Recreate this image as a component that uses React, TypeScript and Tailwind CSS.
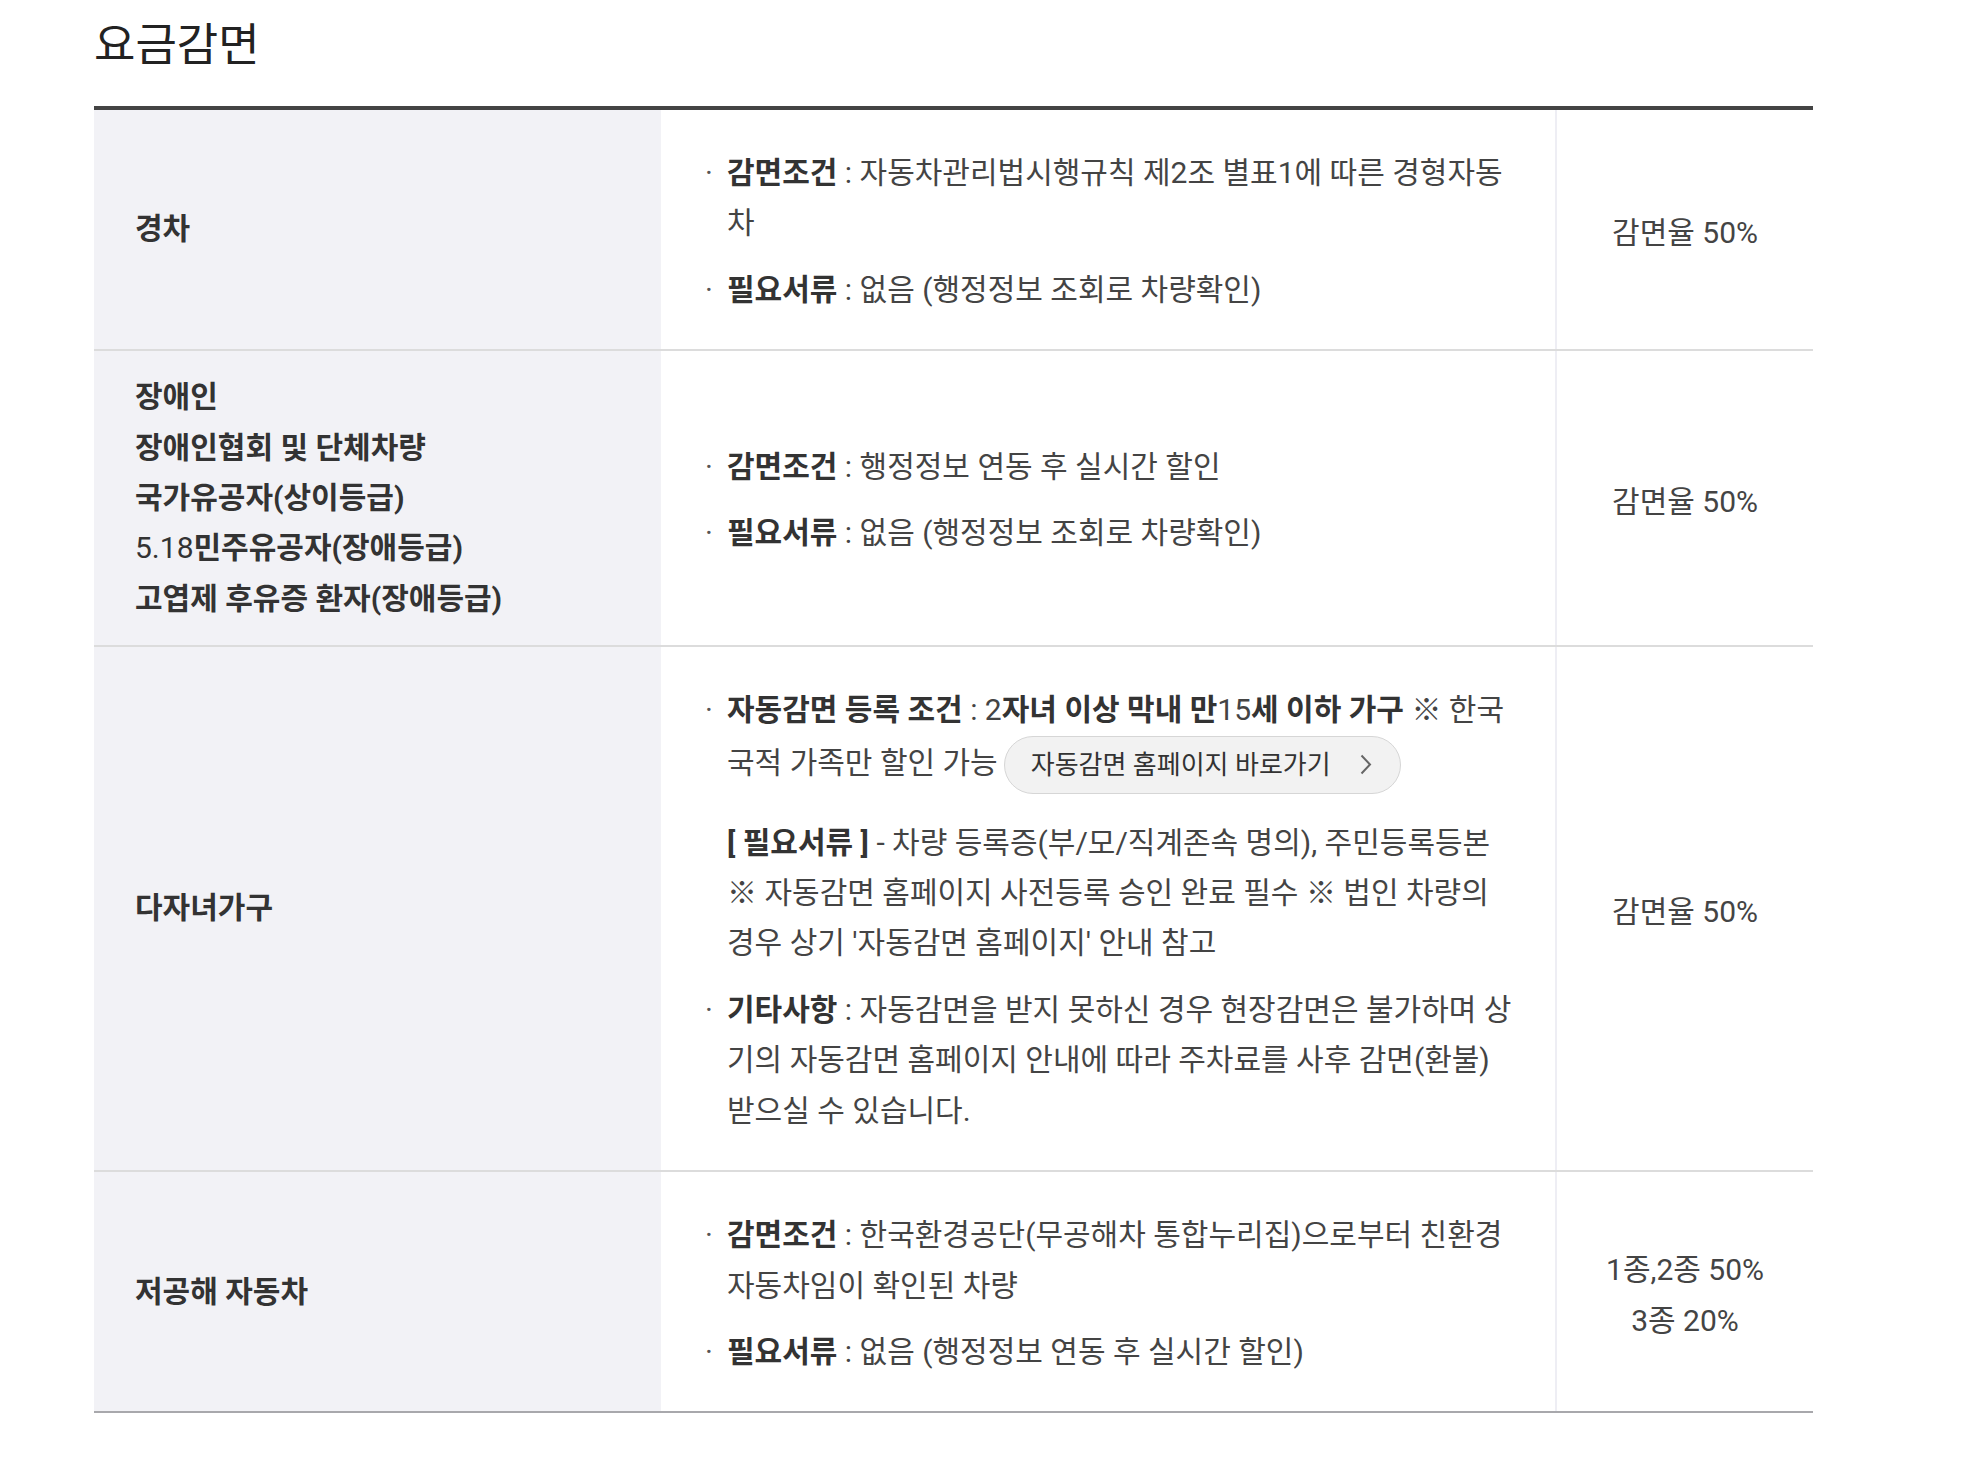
import React from "react";

const Bullet = ({ children }: { children: React.ReactNode }) => (
  <li className="flex mt-4 first:mt-0">
    <span className="w-6 shrink-0 pl-[2px] text-[#555]">·</span>
    <div className="min-w-0 flex-1">{children}</div>
  </li>
);

const Label = ({ children }: { children: React.ReactNode }) => (
  <b className="font-bold text-[#333]">{children}</b>
);

const Chevron = () => (
  <svg width="12" height="21" viewBox="0 0 12 21" fill="none" className="ml-[29px]">
    <polyline points="1.5,1.5 10,10.5 1.5,19.5" stroke="#666" strokeWidth="2" />
  </svg>
);

const App = () => {
  return (
    <div className="min-h-screen bg-white font-[Roboto,'Noto_Sans_CJK_KR',sans-serif]">
      <div className="ml-[94px] w-[1719px]">
        <h2 className="mt-[16px] mb-[30px] text-[45px] leading-[60px] font-normal text-[#222]">요금감면</h2>

        <div className="border-t-4 border-[#444] text-[30px] leading-[50.4px] text-[#444]">
          {/* 경차 */}
          <div className="grid grid-cols-[567px_894px_1fr] border-b-2 border-[#dcdcdc]">
            <div className="bg-[#f2f2f6] flex items-center pl-[41px] py-[21px] font-bold text-[#333]">경차</div>
            <div className="pl-[42px] pr-[38px] pt-[38px] pb-[34px]">
              <ul>
                <Bullet>
                  <Label>감면조건</Label> : 자동차관리법시행규칙 제2조 별표1에 따른 경형자동차
                </Bullet>
                <Bullet>
                  <Label>필요서류</Label> : 없음 (행정정보 조회로 차량확인)
                </Bullet>
              </ul>
            </div>
            <div className="border-l-2 border-[#eeeef4] pt-2 flex items-center justify-center text-center">감면율 50%</div>
          </div>

          {/* 장애인 */}
          <div className="grid grid-cols-[567px_894px_1fr] border-b-2 border-[#dcdcdc]">
            <div className="bg-[#f2f2f6] flex flex-col justify-center pl-[41px] py-[21px] font-bold text-[#333]">
              <p>장애인</p>
              <p>장애인협회 및 단체차량</p>
              <p>국가유공자(상이등급)</p>
              <p>
                <span className="font-normal">5.18</span>민주유공자(장애등급)
              </p>
              <p>고엽제 후유증 환자(장애등급)</p>
            </div>
            <div className="pl-[42px] pr-[38px] pt-[38px] pb-[34px] flex flex-col justify-center">
              <ul>
                <Bullet>
                  <Label>감면조건</Label> : 행정정보 연동 후 실시간 할인
                </Bullet>
                <Bullet>
                  <Label>필요서류</Label> : 없음 (행정정보 조회로 차량확인)
                </Bullet>
              </ul>
            </div>
            <div className="border-l-2 border-[#eeeef4] pt-2 flex items-center justify-center text-center">감면율 50%</div>
          </div>

          {/* 다자녀가구 */}
          <div className="grid grid-cols-[567px_894px_1fr] border-b-2 border-[#dcdcdc]">
            <div className="bg-[#f2f2f6] flex items-center pl-[41px] py-[21px] font-bold text-[#333]">다자녀가구</div>
            <div className="pl-[42px] pr-[38px] pt-[38px] pb-[34px]">
              <ul>
                <Bullet>
                  <p>
                    <Label>자동감면 등록 조건</Label> : 2<Label>자녀 이상 막내 만</Label>15<Label>세 이하 가구</Label> ※ 한국국적 가족만 할인 가능
                    <a
                      href="#"
                      className="ml-[6px] inline-flex h-[58px] items-center rounded-full border border-[#d6d6d6] bg-[#f2f2f2] pl-[26px] pr-[28px] align-middle text-[26px] leading-none text-[#333]"
                    >
                      자동감면 홈페이지 바로가기
                      <Chevron />
                    </a>
                  </p>
                  <p className="mt-6">
                    <Label>[ 필요서류 ]</Label> - 차량 등록증(부/모/직계존속 명의), 주민등록등본 ※ 자동감면 홈페이지 사전등록 승인 완료 필수 ※ 법인 차량의 경우 상기 '자동감면 홈페이지' 안내 참고
                  </p>
                </Bullet>
                <Bullet>
                  <Label>기타사항</Label> : 자동감면을 받지 못하신 경우 현장감면은 불가하며 상기의 자동감면 홈페이지 안내에 따라 주차료를 사후 감면(환불) 받으실 수 있습니다.
                </Bullet>
              </ul>
            </div>
            <div className="border-l-2 border-[#eeeef4] pt-2 flex items-center justify-center text-center">감면율 50%</div>
          </div>

          {/* 저공해 자동차 */}
          <div className="grid grid-cols-[567px_894px_1fr] border-b-2 border-[#a8a8ac]">
            <div className="bg-[#f2f2f6] flex items-center pl-[41px] py-[21px] font-bold text-[#333]">저공해 자동차</div>
            <div className="pl-[42px] pr-[38px] pt-[38px] pb-[34px]">
              <ul>
                <Bullet>
                  <Label>감면조건</Label> : 한국환경공단(무공해차 통합누리집)으로부터 친환경 자동차임이 확인된 차량
                </Bullet>
                <Bullet>
                  <Label>필요서류</Label> : 없음 (행정정보 연동 후 실시간 할인)
                </Bullet>
              </ul>
            </div>
            <div className="border-l-2 border-[#eeeef4] pt-2 flex flex-col items-center justify-center text-center">
              <p>1종,2종 50%</p>
              <p>3종 20%</p>
            </div>
          </div>
        </div>
      </div>
    </div>
  );
};

export default App;
